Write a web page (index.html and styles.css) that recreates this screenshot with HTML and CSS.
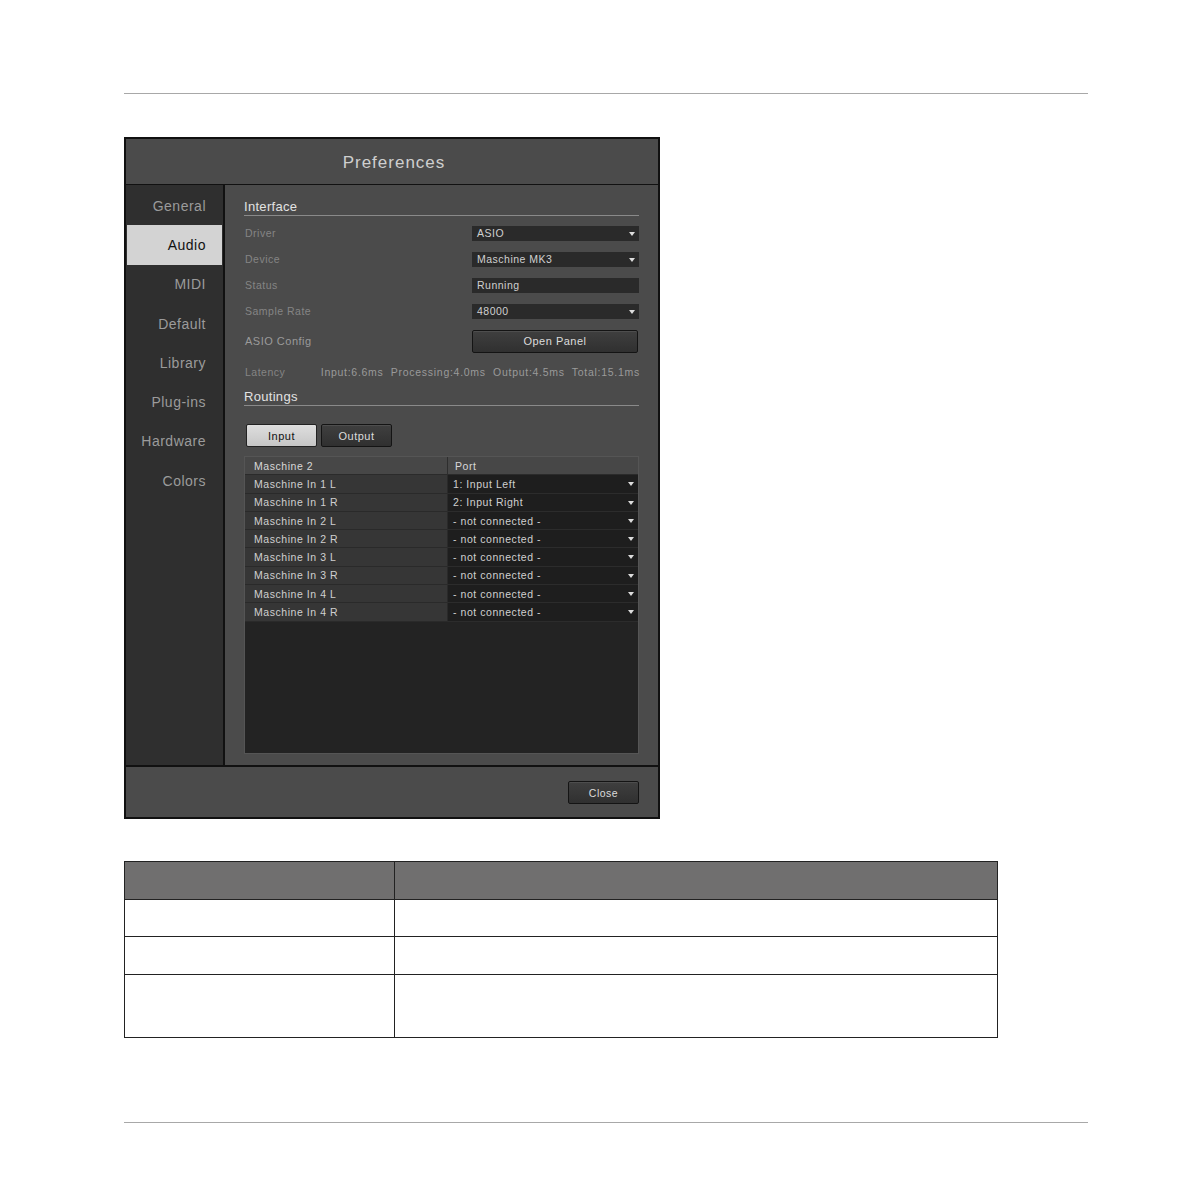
FILE: index.html
```html
<!DOCTYPE html>
<html>
<head>
<meta charset="utf-8">
<link rel="stylesheet" href="styles.css">
</head>
<body>
<div class="page">
  <div class="rule top"></div>
  <div class="dialog">
    <div class="titlebar">Preferences</div>
    <div class="middle">
      <div class="sidebar">
        <div class="nav">General</div>
        <div class="nav active">Audio</div>
        <div class="nav">MIDI</div>
        <div class="nav">Default</div>
        <div class="nav">Library</div>
        <div class="nav">Plug-ins</div>
        <div class="nav">Hardware</div>
        <div class="nav">Colors</div>
      </div>
      <div class="content">
        <div class="heading first">Interface</div>
        <div class="row"><span class="label">Driver</span><div class="select">ASIO</div></div>
        <div class="row"><span class="label">Device</span><div class="select">Maschine MK3</div></div>
        <div class="row"><span class="label">Status</span><div class="field">Running</div></div>
        <div class="row"><span class="label">Sample Rate</span><div class="select">48000</div></div>
        <div class="row asio"><span class="label bright">ASIO Config</span><div class="btn panel">Open Panel</div></div>
        <div class="row latency"><span class="label">Latency</span><span class="lat-values">Input:6.6ms&nbsp; Processing:4.0ms&nbsp; Output:4.5ms&nbsp; Total:15.1ms</span></div>
        <div class="heading">Routings</div>
        <div class="tabs">
          <div class="btn tab on">Input</div>
          <div class="btn tab">Output</div>
        </div>
        <div class="grid">
          <div class="grow head"><div class="c1">Maschine 2</div><div class="c2">Port</div></div>
          <div class="grow"><div class="c1">Maschine In 1 L</div><div class="c2 dd">1: Input Left</div></div>
          <div class="grow"><div class="c1">Maschine In 1 R</div><div class="c2 dd">2: Input Right</div></div>
          <div class="grow"><div class="c1">Maschine In 2 L</div><div class="c2 dd">- not connected -</div></div>
          <div class="grow"><div class="c1">Maschine In 2 R</div><div class="c2 dd">- not connected -</div></div>
          <div class="grow"><div class="c1">Maschine In 3 L</div><div class="c2 dd">- not connected -</div></div>
          <div class="grow"><div class="c1">Maschine In 3 R</div><div class="c2 dd">- not connected -</div></div>
          <div class="grow"><div class="c1">Maschine In 4 L</div><div class="c2 dd">- not connected -</div></div>
          <div class="grow"><div class="c1">Maschine In 4 R</div><div class="c2 dd">- not connected -</div></div>
        </div>
      </div>
    </div>
    <div class="footer"><div class="btn close">Close</div></div>
  </div>
  <table class="doc">
    <tr class="dh"><th class="k"></th><th></th></tr>
    <tr class="r1"><td></td><td></td></tr>
    <tr class="r2"><td></td><td></td></tr>
    <tr class="r3"><td></td><td></td></tr>
  </table>
  <div class="rule bottom"></div>
</div>
</body>
</html>
```
FILE: styles.css
```css
html, body { margin: 0; padding: 0; background: #fff; }
body { font-family: "Liberation Sans", Arial, sans-serif; }
.page { padding-left: 124px; padding-top: 93px; width: 964px; }
.rule { height: 1px; background: #a8a8a8; width: 964px; }
.rule.bottom { margin-top: 84px; }

.dialog {
  margin-top: 43px;
  width: 532px;
  border: 2px solid #111;
  background: #4b4b4b;
  display: flex;
  flex-direction: column;
}
.titlebar {
  border-bottom: 1px solid #111;
  display: flex; align-items: center; justify-content: center;
  color: #cfcfcf; font-size: 17px; letter-spacing: 1px;
  padding-top: 2px; padding-left: 4px; box-sizing: border-box; height: 46px;
}
.middle { display: flex; height: 580px; }
.sidebar {
  width: 97px; background: #2f2f2f; border-right: 2px solid #111;
  padding-top: 1px; box-sizing: content-box;
}
.nav {
  height: 39.3px; display: flex; align-items: center; justify-content: flex-end;
  padding-right: 17px; color: #9b9b9b; font-size: 14px; letter-spacing: 0.5px;
}
.nav.active { background: #d3d3d3; color: #111; margin: 0 1px 0 1px; padding-right: 16px; }
.content { flex: 1; padding: 0 19px; display: flex; flex-direction: column; }
.heading {
  color: #e2e2e2; font-size: 13px; letter-spacing: 0.3px; line-height: 15px;
  border-bottom: 1px solid #8a8a8a; padding-bottom: 1px; margin-top: 0;
}
.heading.first { margin-top: 14px; margin-bottom: 4px; }
.row { height: 26px; display: flex; align-items: center; justify-content: space-between; }
.row.asio { height: 34px; }
.row.latency { height: 31px; padding-bottom: 3px; box-sizing: border-box; }
.label { color: #858585; font-size: 10.5px; letter-spacing: 0.5px; padding-left: 1px; }
.label.bright { color: #9a9a9a; font-size: 11px; }
.select, .field {
  width: 167px; height: 15px; box-sizing: border-box; background: #2a2a2a;
  color: #d0d0d0; font-size: 10.5px; letter-spacing: 0.5px; line-height: 15px;
  padding-left: 5px; position: relative;
}
.select::after, .dd::after {
  content: ""; position: absolute; right: 4px; top: 6px;
  border-left: 3.5px solid transparent; border-right: 3.5px solid transparent;
  border-top: 4px solid #ddd;
}
.btn {
  box-sizing: border-box; display: flex; align-items: center; justify-content: center;
  border: 1px solid #141414; border-radius: 2px;
  background: linear-gradient(#3f3f3f, #303030);
  color: #dcdcdc; font-size: 11px; letter-spacing: 0.5px;
  box-shadow: inset 0 1px 0 rgba(255,255,255,0.08);
}
.btn.panel { width: 166px; height: 23px; margin-right: 1px; }
.lat-values { color: #9a9a9a; font-size: 10.5px; letter-spacing: 0.72px; margin-right: -1px; }
.tabs { display: flex; gap: 4px; margin-top: 18px; padding-left: 2px; }
.btn.tab { width: 71px; height: 23px; }
.btn.tab.on { background: linear-gradient(#dedede, #c6c6c6); color: #111; border-color: #222; }
.grid {
  margin-top: 9px; height: 298px; box-sizing: border-box; background: #232323;
  border: 1px solid #555;
}
.grow { display: flex; height: 18.3px; }
.grow .c1, .grow .c2 {
  display: flex; align-items: center; font-size: 10.5px; letter-spacing: 0.55px;
  color: #d0d0d0; box-sizing: border-box;
}
.grow .c1 { width: 202px; padding-left: 9px; background: #363636; border-bottom: 1px solid #2a2a2a; }
.grow .c2 { flex: 1; padding-left: 5px; background: #1e1e1e; border-bottom: 1px solid #2c2c2c; border-left: 1px solid #2a2a2a; position: relative; }
.grow.head .c1, .grow.head .c2 { background: #474747; border-bottom: 1px solid #2b2b2b; color: #d8d8d8; }
.grow.head .c2 { border-left: 1px solid #2e2e2e; padding-left: 7px; }
.dd::after { top: 7px; right: 4px; }
.footer {
  height: 52px; box-sizing: border-box; border-top: 2px solid #111;
  display: flex; justify-content: flex-end; align-items: flex-start;
  padding: 14px 19px 0 0;
}
.btn.close { width: 71px; height: 23px; font-size: 10.5px; }

.doc {
  margin-top: 42px; width: 874px; border-collapse: collapse;
}
.doc th, .doc td { border: 1.5px solid #222; padding: 0; }
.doc .dh th { background: #706f6f; height: 37px; }
.doc th.k, .doc td:first-child { width: 269px; }
.doc .r1 td { height: 36px; }
.doc .r2 td { height: 37px; }
.doc .r3 td { height: 62px; }
```
